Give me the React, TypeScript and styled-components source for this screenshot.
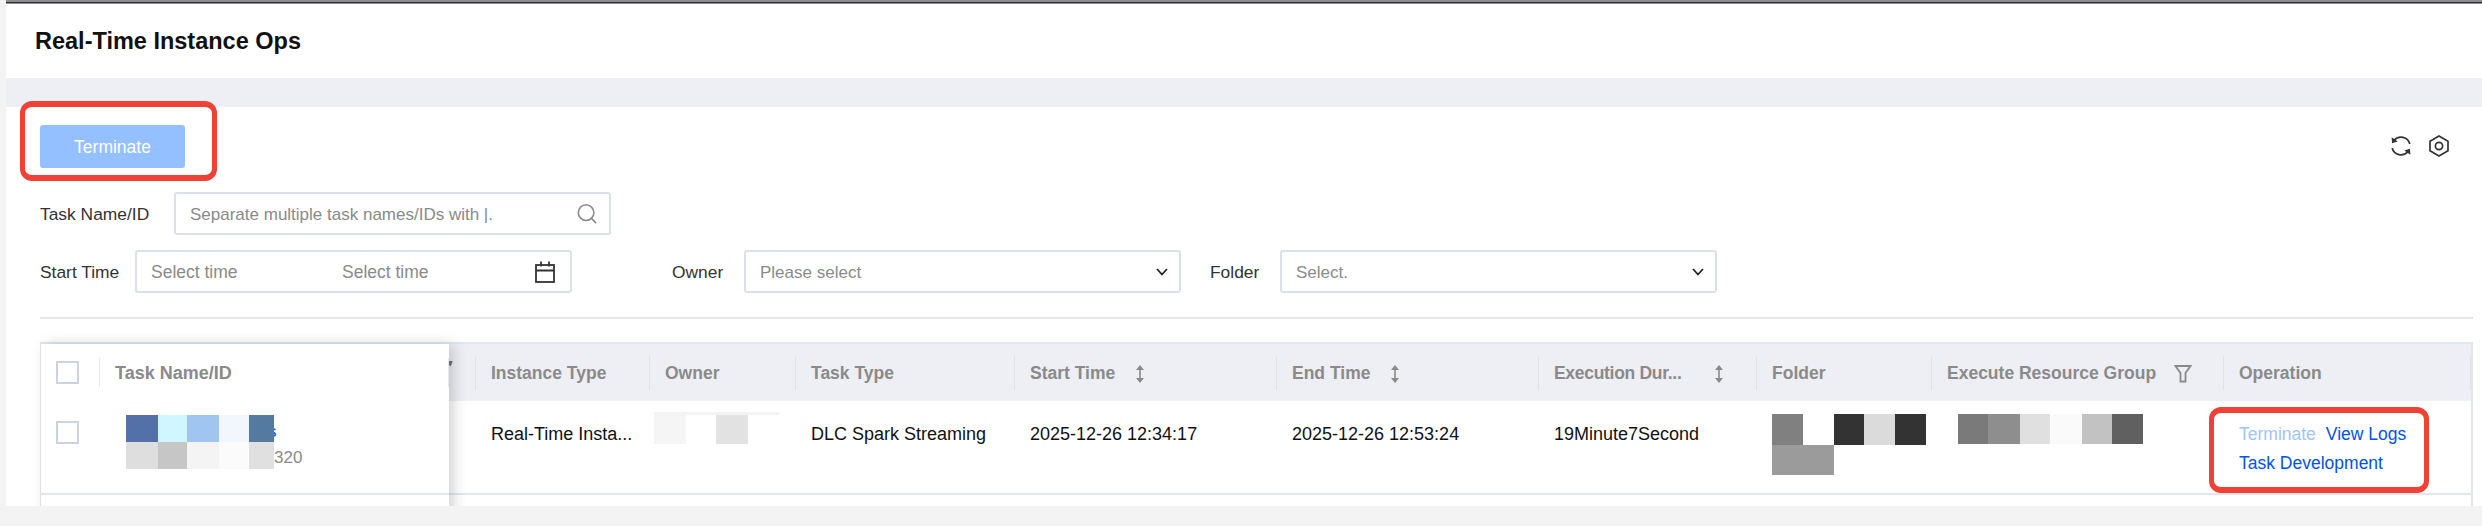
import React from "react";
import styled, { createGlobalStyle } from "styled-components";

const GlobalStyle = createGlobalStyle`
  html, body {
    margin: 0;
    padding: 0;
    background: #f3f3f3;
  }
  * {
    box-sizing: border-box;
  }
`;

const SearchIcon = () => (
  <svg width="22" height="22" viewBox="0 0 24 24" fill="none" stroke="#8a8a8a" strokeWidth="1.7">
    <circle cx="11" cy="10.5" r="8.5" />
    <path d="M17 17l5 5" />
  </svg>
);

const CalendarIcon = () => (
  <svg width="24" height="24" viewBox="0 0 24 24" fill="none" stroke="#333" strokeWidth="1.8">
    <rect x="3" y="5" width="18" height="17" />
    <path d="M3 10.5h18M8 1.5v5M16 1.5v5" />
  </svg>
);

const ChevronIcon = () => (
  <svg width="14" height="10" viewBox="0 0 14 10" fill="none" stroke="#222" strokeWidth="1.8">
    <path d="M2 2l5 5.5L12 2" />
  </svg>
);

const RefreshIcon = () => (
  <svg width="24" height="24" viewBox="0 0 24 24" fill="none" stroke="#333" strokeWidth="1.7">
    <path d="M5 6.5A9 9 0 0 1 20.8 10" />
    <path d="M19 17.5A9 9 0 0 1 3.2 14" />
    <path d="M2.6 3.2l.5 6 5.6-1.6z" fill="#333" stroke="none" />
    <path d="M21.4 20.8l-.5-6-5.6 1.6z" fill="#333" stroke="none" />
  </svg>
);

const HexIcon = () => (
  <svg width="22" height="24" viewBox="0 0 22 24" fill="none" stroke="#333" strokeWidth="1.7">
    <path d="M11 2l9 5.2v9.6L11 22l-9-5.2V7.2z" />
    <circle cx="11" cy="12" r="3.6" />
  </svg>
);

const SortIcon = () => (
  <svg width="10" height="18" viewBox="0 0 10 18" fill="#8a8a8a">
    <path d="M5 0l4 5H1zM5 18l4-5H1z" />
    <rect x="4.2" y="4" width="1.6" height="10" />
  </svg>
);

const FunnelIcon = () => (
  <svg width="18" height="20" viewBox="0 0 18 20" fill="none" stroke="#8a8a8a" strokeWidth="1.8">
    <path d="M1.5 2h15l-5 7v8.5h-5V9z" />
  </svg>
);

type Tile = [number, string];

const taskTiles: Tile[] = [
  [32, "#5470a8"],
  [29, "#d0f6ff"],
  [32, "#a0c5f0"],
  [30, "#f2f6fd"],
  [25, "#557aa0"],
  [32, "#dedede"],
  [29, "#c6c6c6"],
  [32, "#f4f4f4"],
  [30, "#fbfbfb"],
  [25, "#e0e0e0"],
];

const ownerTiles: Tile[] = [
  [32, "#f5f5f5"],
  [30, "#ffffff"],
  [32, "#e2e2e2"],
];

const folderTiles: Tile[] = [
  [31, "#808080"],
  [31, "#ffffff"],
  [30, "#333333"],
  [31, "#dbdbdb"],
  [31, "#333333"],
  [31, "#9b9b9b"],
  [31, "#9b9b9b"],
];

const resourceTiles: Tile[] = [
  [30, "#7a7a7a"],
  [32, "#8e8e8e"],
  [30, "#e0e0e0"],
  [32, "#fafafa"],
  [30, "#c2c2c2"],
  [31, "#606060"],
];

const Mosaic: React.FC<{ tiles: Tile[]; columns: number; height: number }> = ({ tiles, columns, height }) => (
  <MosaicGrid $columns={tiles.slice(0, columns).map((t) => t[0] + "px").join(" ")} $height={height}>
    {tiles.map((t, i) => (
      <MosaicTile key={i} $color={t[1]} />
    ))}
  </MosaicGrid>
);

const App: React.FC = () => {
  return (
    <Page>
      <GlobalStyle />
      <Shell>
        <TitleBar>
          <Title>Real-Time Instance Ops</Title>
        </TitleBar>
        <Band />
        <Content>
          <Toolbar>
            <TerminateWrap>
              <PrimaryButton>Terminate</PrimaryButton>
              <RedMark $left={-20} $top={-24} $width={197} $height={80} />
            </TerminateWrap>
            <ToolIcons>
              <RefreshIcon />
              <HexIcon />
            </ToolIcons>
          </Toolbar>

          <Filters>
            <FilterRow>
              <FilterLabel $width={134}>Task Name/ID</FilterLabel>
              <Field $width={437} $pad={11}>
                <Placeholder>Separate multiple task names/IDs with |.</Placeholder>
                <SearchIcon />
              </Field>
            </FilterRow>
            <FilterRow>
              <FilterLabel $width={95}>Start Time</FilterLabel>
              <Field $width={437} $pad={13}>
                <DateText>Select time</DateText>
                <DateText>Select time</DateText>
                <CalendarIcon />
              </Field>
              <FilterLabel $width={72} $offset={100}>Owner</FilterLabel>
              <Field $width={437} $pad={10}>
                <Placeholder>Please select</Placeholder>
                <ChevronIcon />
              </Field>
              <FilterLabel $width={70} $offset={29}>Folder</FilterLabel>
              <Field $width={437} $pad={10}>
                <Placeholder>Select.</Placeholder>
                <ChevronIcon />
              </Field>
            </FilterRow>
          </Filters>

          <Divider />

          <Table>
            <FixedColumn>
              <FixedHead>
                <CheckCell>
                  <Checkbox />
                </CheckCell>
                <FixedHeadTitle>Task Name/ID</FixedHeadTitle>
              </FixedHead>
              <FixedRow>
                <CheckCell>
                  <Checkbox />
                </CheckCell>
                <TaskCell>
                  <Mosaic tiles={taskTiles} columns={5} height={54} />
                  <TaskTail>
                    <TaskSliver>
                      <TaskSliverText>s</TaskSliverText>
                    </TaskSliver>
                    <TaskId>320</TaskId>
                  </TaskTail>
                </TaskCell>
              </FixedRow>
              <NextRowStub />
            </FixedColumn>

            <ScrollArea>
              <HeadRow>
                <HeadCell>
                  <HiddenMark />
                </HeadCell>
                <HeadCell>Instance Type</HeadCell>
                <HeadCell>Owner</HeadCell>
                <HeadCell>Task Type</HeadCell>
                <HeadCell>
                  Start Time
                  <HeadIcon $gap={20}>
                    <SortIcon />
                  </HeadIcon>
                </HeadCell>
                <HeadCell>
                  End Time
                  <HeadIcon $gap={20}>
                    <SortIcon />
                  </HeadIcon>
                </HeadCell>
                <HeadCell>
                  <TruncatedLabel>Execution Dur...</TruncatedLabel>
                  <HeadIcon $gap={33}>
                    <SortIcon />
                  </HeadIcon>
                </HeadCell>
                <HeadCell>Folder</HeadCell>
                <HeadCell>
                  Execute Resource Group
                  <HeadIcon $gap={18}>
                    <FunnelIcon />
                  </HeadIcon>
                </HeadCell>
                <HeadCell>Operation</HeadCell>
              </HeadRow>
              <BodyRow>
                <BodyCell />
                <BodyCell>Real-Time Insta...</BodyCell>
                <BodyCell $flush>
                  <OwnerBlock>
                    <OwnerStrip />
                    <Mosaic tiles={ownerTiles} columns={3} height={29} />
                  </OwnerBlock>
                </BodyCell>
                <BodyCell>DLC Spark Streaming</BodyCell>
                <BodyCell>2025-12-26 12:34:17</BodyCell>
                <BodyCell>2025-12-26 12:53:24</BodyCell>
                <BodyCell>19Minute7Second</BodyCell>
                <BodyCell $mosaic>
                  <Mosaic tiles={folderTiles} columns={5} height={61} />
                </BodyCell>
                <BodyCell $mosaic $indent={26}>
                  <Mosaic tiles={resourceTiles} columns={6} height={30} />
                </BodyCell>
                <OperationCell>
                  <OpLine>
                    <OpLink $disabled>Terminate</OpLink>
                    <OpLink>View Logs</OpLink>
                  </OpLine>
                  <OpLine>
                    <OpLink>Task Development</OpLink>
                  </OpLine>
                  <RedMark $left={-15} $top={6} $width={220} $height={86} />
                </OperationCell>
              </BodyRow>
              <NextRowStub />
            </ScrollArea>
          </Table>
        </Content>
      </Shell>
    </Page>
  );
};

export default App;

const Page = styled.div`
  width: 2482px;
  height: 526px;
  padding-left: 6px;
  background: #f3f3f3;
  overflow: hidden;
  font-family: "Liberation Sans", Arial, sans-serif;
`;

const Shell = styled.div`
  background: #fff;
  height: 506px;
  overflow: hidden;
`;

const TitleBar = styled.div`
  height: 78px;
  padding: 2px 0 0 29px;
  display: flex;
  align-items: center;
  background: #fff;
  border-top: 2px solid #8d8d94;
  box-shadow: inset 0 1.5px 0 #2b2b30;
`;

const Title = styled.h1`
  margin: 0;
  font-size: 23.5px;
  font-weight: 700;
  color: #111;
`;

const Band = styled.div`
  height: 29px;
  background: #eeeff4;
`;

const Content = styled.div`
  padding: 18px 9px 0 34px;
`;

const Toolbar = styled.div`
  display: flex;
  justify-content: space-between;
  align-items: center;
  height: 43px;
`;

const TerminateWrap = styled.div`
  position: relative;
`;

const PrimaryButton = styled.button`
  width: 145px;
  height: 43px;
  padding: 2px 0 0;
  border: 0;
  border-radius: 3px;
  background: #94c0ff;
  color: #fff;
  font: 17.5px "Liberation Sans", Arial, sans-serif;
`;

const RedMark = styled.div<{ $left: number; $top: number; $width: number; $height: number }>`
  position: absolute;
  left: ${(p) => p.$left}px;
  top: ${(p) => p.$top}px;
  width: ${(p) => p.$width}px;
  height: ${(p) => p.$height}px;
  border: solid #ef4135;
  border-width: 6px 5px;
  border-radius: 12px;
`;

const ToolIcons = styled.div`
  display: flex;
  align-items: center;
  gap: 15px;
  margin-right: 23px;
  margin-top: -1px;
`;

const Filters = styled.div`
  display: flex;
  flex-direction: column;
  gap: 15px;
  margin-top: 24px;
`;

const FilterRow = styled.div`
  display: flex;
  align-items: center;
`;

const FilterLabel = styled.label<{ $width: number; $offset?: number }>`
  width: ${(p) => p.$width}px;
  margin-left: ${(p) => p.$offset ?? 0}px;
  padding-top: 2px;
  font-size: 17.4px;
  color: #333;
  flex: none;
`;

const Field = styled.div<{ $width: number; $pad: number }>`
  width: ${(p) => p.$width}px;
  height: 43px;
  flex: none;
  display: flex;
  align-items: center;
  justify-content: space-between;
  padding: 0 ${(p) => p.$pad}px 0 14px;
  border: 2px solid #dde0e9;
  border-radius: 3px;
  background: #fff;
`;

const Placeholder = styled.span`
  padding-top: 2px;
  font-size: 17px;
  color: #8a8a8a;
`;

const DateText = styled.span`
  width: 188px;
  flex: none;
  padding-top: 2px;
  font-size: 17.5px;
  color: #8a8a8a;
`;

const Divider = styled.div`
  height: 2px;
  margin-top: 24px;
  background: #e4e6ea;
`;

const Table = styled.div`
  display: flex;
  margin-top: 23px;
  border-top: 2px solid #e2e6ee;
  border-left: 1px solid #e2e6ee;
  border-right: 2px solid #e2e6ee;
`;

const FixedColumn = styled.div`
  position: relative;
  z-index: 2;
  width: 408px;
  flex: none;
  background: #fff;
  box-shadow: 5px 0 12px rgba(60, 60, 70, 0.22);
`;

const FixedHead = styled.div`
  height: 57px;
  display: flex;
  align-items: center;
`;

const FixedRow = styled.div`
  display: flex;
  height: 94px;
  padding-top: 20px;
  border-bottom: 2px solid #e2e6ee;
`;

const NextRowStub = styled.div`
  height: 24px;
  background: #fff;
`;

const CheckCell = styled.div`
  width: 58px;
  padding-left: 15px;
  flex: none;
`;

const Checkbox = styled.div`
  width: 23px;
  height: 23px;
  background: #fff;
  border: 2px solid #ccd2e0;
`;

const FixedHeadTitle = styled.div`
  flex: 1;
  height: 29px;
  padding-left: 15px;
  line-height: 31px;
  font-size: 18px;
  font-weight: 700;
  color: #8a8a8a;
  border-left: 1px solid #e6e7ec;
  border-right: 1px solid #e6e7ec;
`;

const TaskCell = styled.div`
  display: flex;
  margin-top: -6px;
  padding-left: 27px;
`;

const TaskTail = styled.div`
  display: flex;
  flex-direction: column;
`;

const TaskSliver = styled.div`
  width: 3px;
  height: 30px;
  line-height: 34px;
  overflow: hidden;
`;

const TaskSliverText = styled.span`
  display: block;
  margin-left: -6px;
  font-size: 17px;
  color: #0052d9;
`;

const TaskId = styled.div`
  margin-top: 1px;
  line-height: 24px;
  font-size: 17px;
  color: #8a8a8a;
`;

const MosaicGrid = styled.div<{ $columns: string; $height: number }>`
  display: grid;
  grid-template-columns: ${(p) => p.$columns};
  grid-auto-rows: 1fr;
  height: ${(p) => p.$height}px;
  flex: none;
  align-self: flex-start;
`;

const MosaicTile = styled.div<{ $color: string }>`
  background: ${(p) => p.$color};
`;

const ScrollArea = styled.div`
  flex: 1;
  min-width: 0;
`;

const columns = "27px 174px 146px 219px 262px 262px 218px 175px 292px 1fr";

const HeadRow = styled.div`
  display: grid;
  grid-template-columns: ${columns};
  height: 57px;
  background: #eeeff4;
  align-items: center;
`;

const HeadCell = styled.div`
  position: relative;
  display: flex;
  align-items: center;
  height: 34px;
  padding: 2px 0 0 15px;
  font-size: 17.5px;
  font-weight: 700;
  color: #8a8a8a;
  white-space: nowrap;
  border-right: 1px solid #e0e2e8;
`;

const TruncatedLabel = styled.span`
  letter-spacing: -0.3px;
`;

const HeadIcon = styled.span<{ $gap: number }>`
  display: flex;
  margin-left: ${(p) => p.$gap}px;
`;

const HiddenMark = styled.span`
  position: absolute;
  left: 0;
  top: 5px;
  width: 4px;
  height: 6px;
  background: #6e6e6e;
  clip-path: polygon(0 0, 100% 0, 40% 100%, 0 70%);
`;

const BodyRow = styled.div`
  display: grid;
  grid-template-columns: ${columns};
  height: 94px;
  border-bottom: 2px solid #e2e6ee;
`;

const BodyCell = styled.div<{ $mosaic?: boolean; $flush?: boolean; $indent?: number }>`
  padding-top: ${(p) => (p.$flush ? 11 : p.$mosaic ? 13 : 21)}px;
  padding-left: ${(p) => (p.$flush ? 4 : p.$indent ?? 15)}px;
  line-height: 24px;
  font-size: 18px;
  color: #111;
  white-space: nowrap;
`;

const OwnerBlock = styled.div`
  width: 125px;
`;

const OwnerStrip = styled.div`
  height: 3px;
  background: #f4f4f4;
`;

const OperationCell = styled.div`
  position: relative;
  padding: 18px 0 0 15px;
`;

const OpLine = styled.div`
  display: flex;
  gap: 10px;
  height: 29px;
  line-height: 30px;
`;

const OpLink = styled.a<{ $disabled?: boolean }>`
  font-size: 17.5px;
  color: ${(p) => (p.$disabled ? "#a0c4ff" : "#0052ee")};
`;
